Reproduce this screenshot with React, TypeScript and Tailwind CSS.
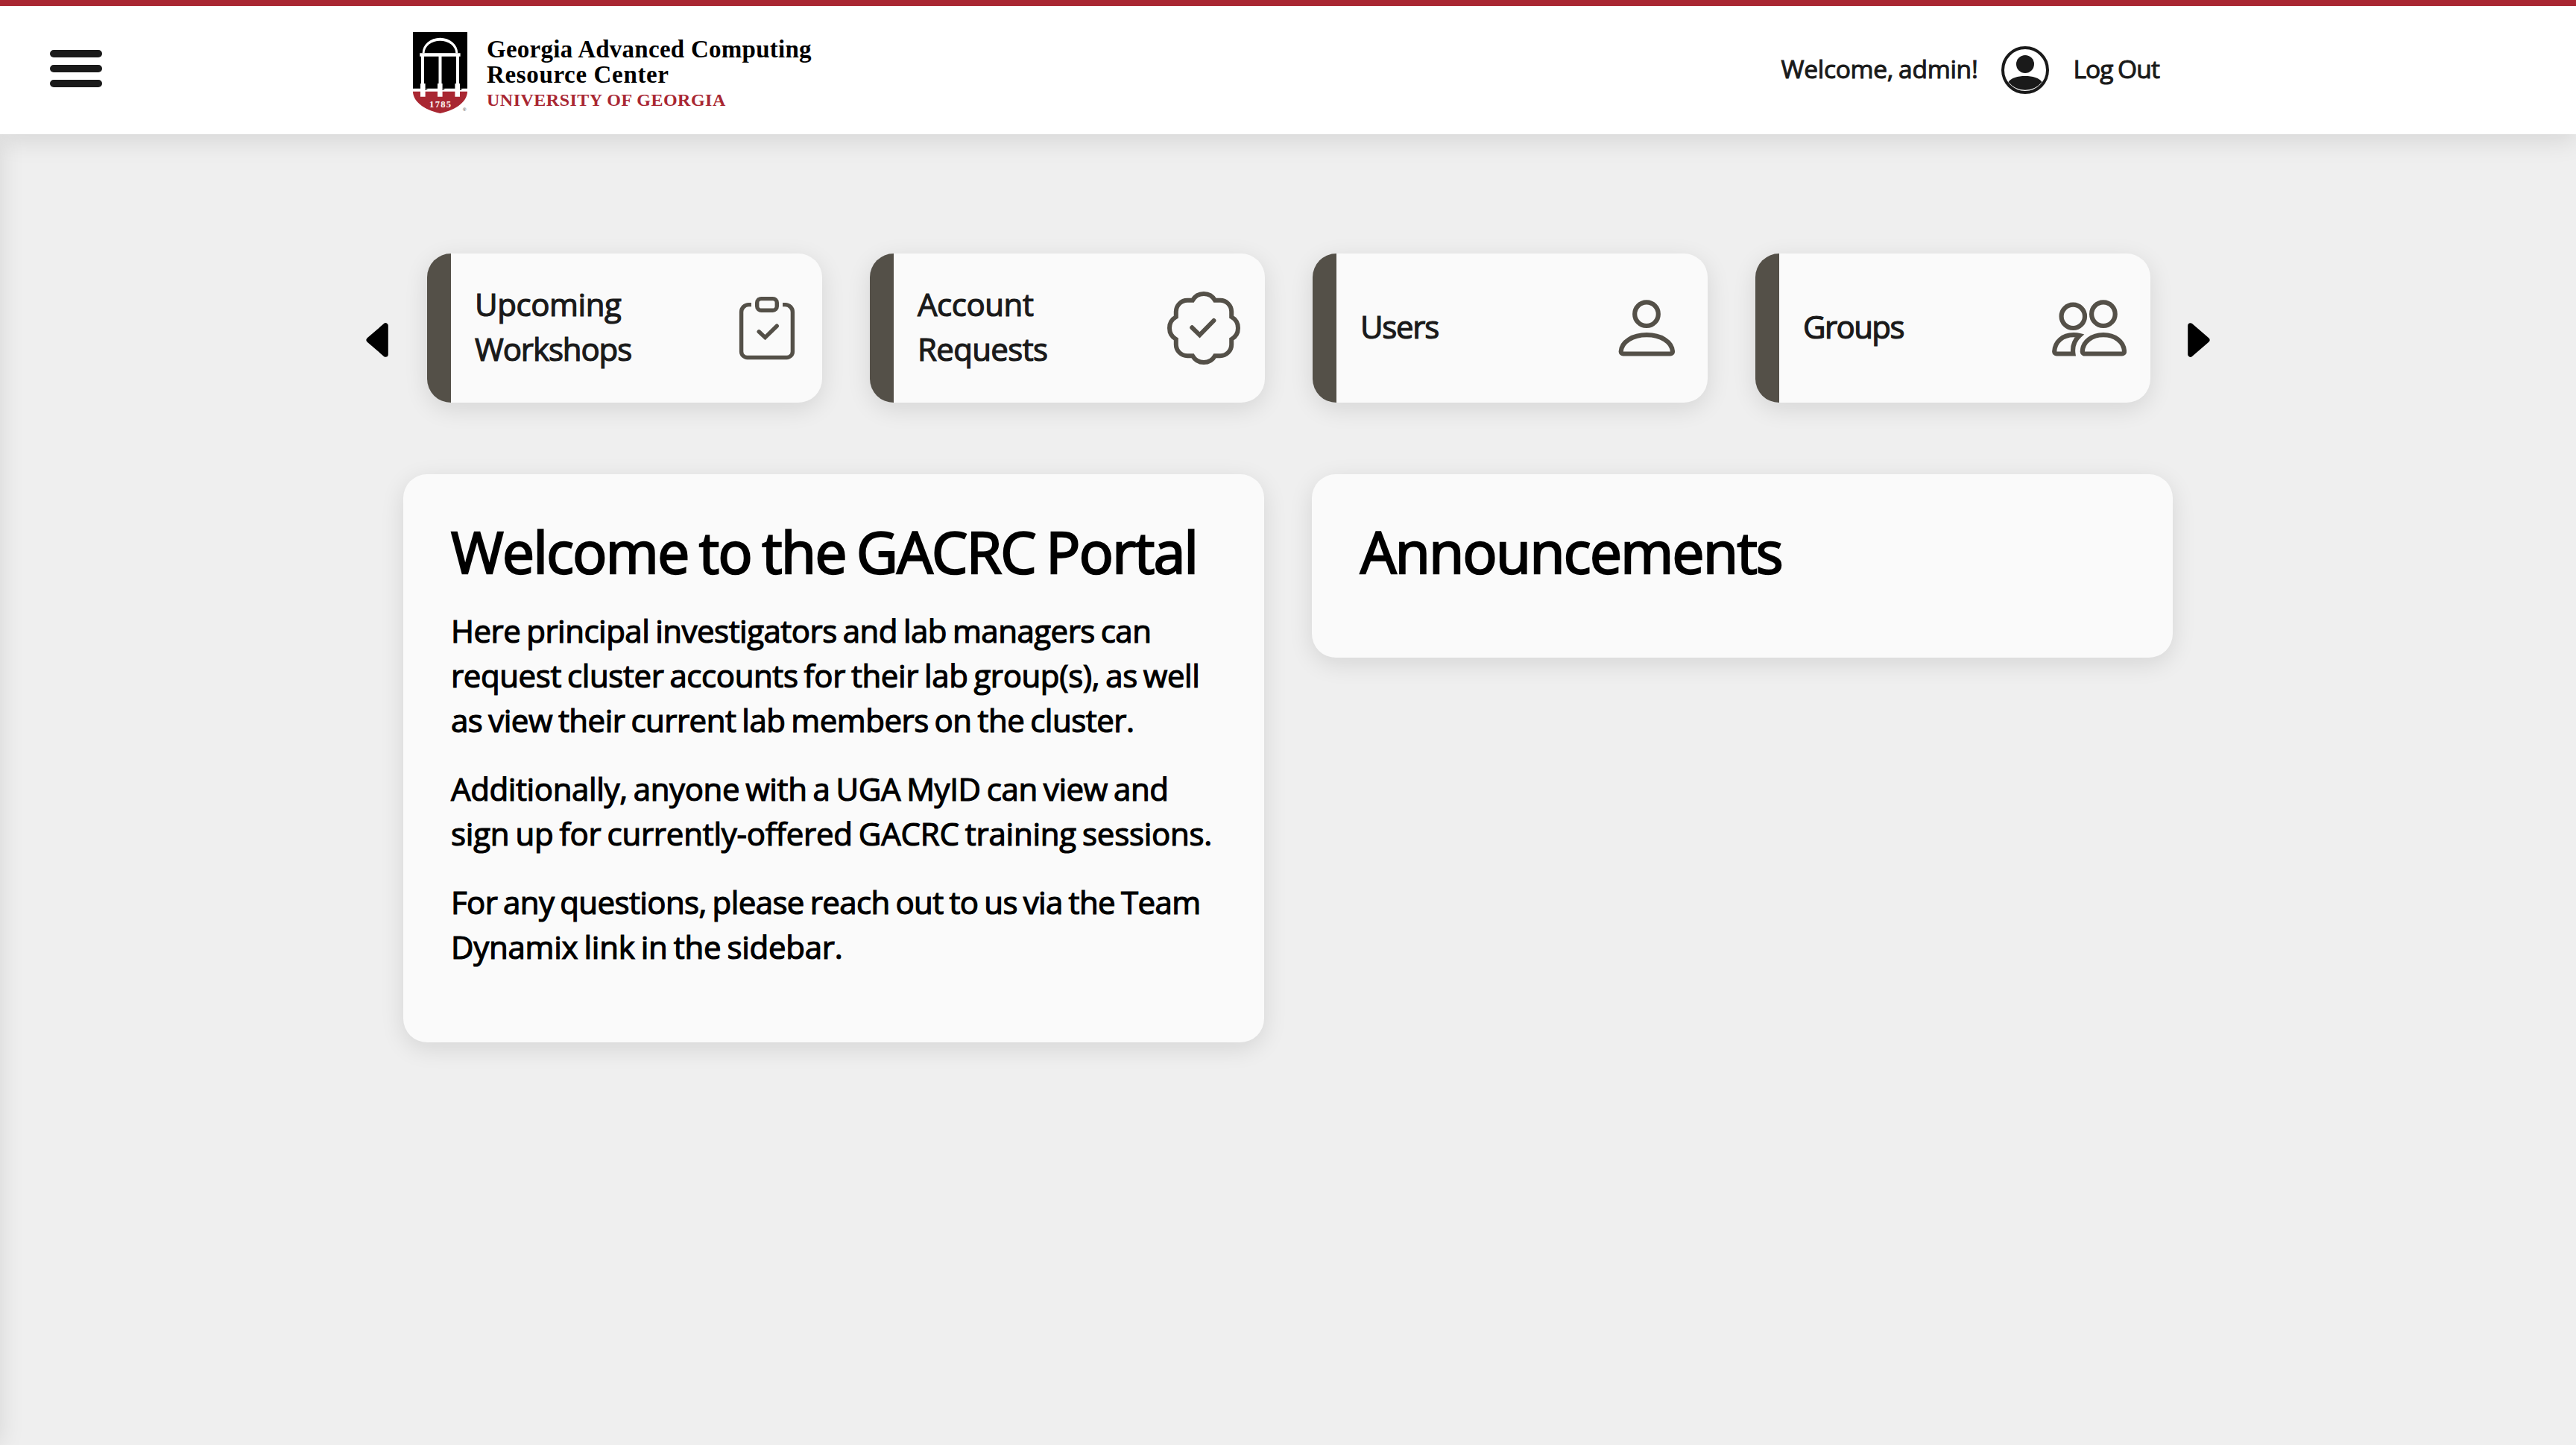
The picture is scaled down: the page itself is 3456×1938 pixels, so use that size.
import React from "react";

function MenuButton() {
  return (
    <button className="ml-[67px] mt-[59px] flex h-[50px] w-[70px] flex-col gap-[10px]" aria-label="Open menu">
      <span className="h-[10px] w-full rounded-full bg-[#1a1a1a]" />
      <span className="h-[10px] w-full rounded-full bg-[#1a1a1a]" />
      <span className="h-[10px] w-full rounded-full bg-[#1a1a1a]" />
    </button>
  );
}

function Shield() {
  return (
    <svg className="h-[112px] w-[76px]" viewBox="0 0 76 112">
      <path d="M0 0H73V75.8H0Z" fill="#000" />
      <path d="M12.6 28.5A23.85 20.8 0 0 1 60.3 28.5Z" fill="#fff" />
      <path d="M15.5 28.5A20.9 16.8 0 0 1 57.3 28.5Z" fill="#000" />
      <g fill="#fff">
        <path d="M9.2 28.3H63.6V32.7H9.2Z" />
        <path d="M11 32H15V70H11ZM34.5 32H38.5V70H34.5ZM58 32H62V70H58Z" />
      </g>
      <path d="M0 79.8H73C73 92 60 104 36.5 109C13 104 0 92 0 79.8Z" fill="#a92732" />
      <g fill="#fff">
        <path d="M10 69H16.6V86.7H10ZM33 69H39.6V86.7H33ZM56.4 69H63V86.7H56.4Z" />
      </g>
      <path d="M16.6 75.8H20.5L16.6 78ZM39.6 75.8H43.5L39.6 78ZM63 75.8H67L63 78Z" fill="#000" />
      <text x="37.2" y="100.7" textAnchor="middle" fontSize="12.5" letterSpacing="1.3" fill="#fff" className="font-['Liberation_Serif'] font-bold">
        1785
      </text>
      <text x="67" y="106" fontSize="6" fill="#333" className="font-['Liberation_Sans']">
        ®
      </text>
    </svg>
  );
}

function Logo() {
  return (
    <a className="flex pl-[13.5px] pt-[35px]">
      <Shield />
      <div className="ml-[23.5px] mt-[7px] flex flex-col whitespace-nowrap font-['Liberation_Serif',serif] font-bold text-black">
        <span className="text-[33px] leading-[33.7px] tracking-[0.26px]">Georgia Advanced Computing</span>
        <span className="text-[33px] leading-[33.7px] tracking-[0.65px]">Resource Center</span>
        <span className="text-[24px] leading-[35px] tracking-[0.5px] text-[#a92732]">UNIVERSITY OF GEORGIA</span>
      </div>
    </a>
  );
}

function Avatar() {
  return (
    <svg className="size-16" viewBox="0 0 64 64" fill="#1a1a1a">
      <circle cx="32" cy="32" r="30" fill="none" stroke="#1a1a1a" strokeWidth="4" />
      <circle cx="32" cy="24" r="12" />
      <path d="M9.5 48C13 42.6 22 40 32 40s19 2.6 22.5 8A29 29 0 0 1 9.5 48Z" />
    </svg>
  );
}

function Header() {
  return (
    <header className="relative z-10 grid h-[180px] grid-cols-[540px_1fr_540px] border-t-8 border-[#a92732] bg-white shadow-[0_8px_32px_rgba(0,0,0,0.11)]">
      <MenuButton />
      <div className="flex justify-between">
        <Logo />
        <nav className="flex items-center gap-8 whitespace-nowrap pr-[19px] text-[33.6px] leading-[48px] text-[#1a1a1a] [-webkit-text-stroke:1px_#1a1a1a] [word-spacing:-1.5px]">
          <span className="pb-1 tracking-[-0.32px]">Welcome, admin!</span>
          <Avatar />
          <a className="pb-1 tracking-[-0.9px]">Log Out</a>
        </nav>
      </div>
    </header>
  );
}

function CardIcon({ children, stroke }: { children: React.ReactNode; stroke: number }) {
  return (
    <svg className="size-[100px] shrink-0" viewBox="0 0 100 100" fill="none" stroke="#545048" strokeWidth={stroke} strokeLinecap="round">
      {children}
    </svg>
  );
}

const clipboard = (
  <CardIcon stroke={5.4}>
    <path strokeLinecap="butt" d="M37 18.6H33.6A10 10 0 0 0 23.6 28.6V81.5A8 8 0 0 0 31.6 89.5H84.4A8 8 0 0 0 92.4 81.5V28.6A10 10 0 0 0 82.4 18.6H79" />
    <rect x="44.7" y="10.6" width="26.6" height="15.6" rx="5.5" />
    <path d="M47.2 54.8L55.5 62.6L71.2 47.2" />
  </CardIcon>
);

const badge = (
  <CardIcon stroke={6}>
    <path
      strokeLinejoin="miter"
      d="M35 12.8A17.2 17.2 0 0 1 65 12.8H72A15.2 15.2 0 0 1 87.2 28V35A17.2 17.2 0 0 1 87.2 65V72A15.2 15.2 0 0 1 72 87.2H65A17.2 17.2 0 0 1 35 87.2H28A15.2 15.2 0 0 1 12.8 72V65A17.2 17.2 0 0 1 12.8 35V28A15.2 15.2 0 0 1 28 12.8Z"
    />
    <path d="M34.3 49.3L44.5 59.3L63.4 40" />
  </CardIcon>
);

const user = (
  <CardIcon stroke={6.2}>
    <circle cx="50" cy="31.2" r="15.8" />
    <path d="M18.7 84.5H82A3 3 0 0 0 85 81.5C84 68 69 59.2 50.3 59.2S16.6 68 15.7 81.5A3 3 0 0 0 18.7 84.5Z" />
  </CardIcon>
);

const group = (
  <CardIcon stroke={6.2}>
    <circle cx="28.3" cy="34.3" r="15.7" />
    <circle cx="68.9" cy="31.2" r="15.8" />
    <path d="M43.8 84.5H94A3 3 0 0 0 97 81.5C96.5 68 84 59.2 68.9 59.2S41.3 68 40.8 81.5A3 3 0 0 0 43.8 84.5Z" />
    <path d="M28.4 84.5H6.2A3 3 0 0 1 3.2 81.5C3.8 68.5 14 59.2 29 59.2C32 59.2 34.6 59.4 37 60C30.5 66 27 75 28.4 84.5Z" />
  </CardIcon>
);

const cards = [
  { lines: [["Upcoming", "tracking-[-0.41px]"], ["Workshops", "tracking-[-1.1px]"]], icon: clipboard },
  { lines: [["Account", "tracking-[-0.45px]"], ["Requests", "tracking-[-0.65px]"]], icon: badge },
  { lines: [["Users", "tracking-[-1.3px]"]], icon: user },
  { lines: [["Groups", "tracking-[-1.6px]"]], icon: group },
];

function Caret({ flip }: { flip?: boolean }) {
  return (
    <svg className={flip ? "mt-8 h-[46px] w-[30px] rotate-180" : "mt-8 h-[46px] w-[30px]"} viewBox="0 0 30 46" fill="#000" stroke="#000" strokeWidth="7" strokeLinejoin="round">
      <path d="M4 23L26.3 3.7V42.3Z" />
    </svg>
  );
}

function Carousel() {
  return (
    <section className="flex items-center justify-center gap-[51px]">
      <Caret />
      <div className="-mr-px ml-px flex gap-16">
        {cards.map((card) => (
          <a
            key={card.lines[0][0]}
            className="flex h-[200px] w-[530px] items-center justify-between rounded-[32px] border-l-[32px] border-[#545048] bg-[#fafafa] pl-8 pr-8 shadow-[0_8px_32px_rgba(0,0,0,0.11)]"
          >
            <div className="flex flex-col pb-[5px] text-[42px] leading-[60px] text-[#1a1a1a] [-webkit-text-stroke:1.2px_#1a1a1a]">
              {card.lines.map(([text, tracking]) => (
                <span key={text} className={tracking}>
                  {text}
                </span>
              ))}
            </div>
            {card.icon}
          </a>
        ))}
      </div>
      <Caret flip />
    </section>
  );
}

const paragraphs = [
  [
    ["Here principal investigators and lab managers can", "tracking-[-0.5px]"],
    ["request cluster accounts for their lab group(s), as well", "tracking-[-0.4px]"],
    ["as view their current lab members on the cluster.", "tracking-[-0.5px]"],
  ],
  [
    ["Additionally, anyone with a UGA MyID can view and", "tracking-[-0.38px]"],
    ["sign up for currently-offered GACRC training sessions.", "tracking-[-0.24px]"],
  ],
  [
    ["For any questions, please reach out to us via the Team", "tracking-[-0.6px]"],
    ["Dynamix link in the sidebar.", "tracking-[-0.25px]"],
  ],
];

function Panels() {
  return (
    <section className="mx-auto mt-24 grid w-[2374px] grid-cols-2 items-start gap-16 whitespace-nowrap text-black">
      <article className="h-[762px] rounded-[32px] bg-[#fafafa] pl-[64px] pt-[65px] shadow-[0_8px_32px_rgba(0,0,0,0.11)]">
        <h1 className="text-[76.6px] leading-[77px] tracking-[-1.6px] [-webkit-text-stroke:2.4px_#000] [word-spacing:-4px]">
          Welcome to the GACRC Portal
        </h1>
        <div className="mt-[38px] flex flex-col gap-8 text-[42px] leading-[60px] [-webkit-text-stroke:1.2px_#000] [word-spacing:-2.5px]">
          {paragraphs.map((lines, i) => (
            <p key={i}>
              {lines.map(([text, tracking]) => (
                <span key={text} className={`block ${tracking}`}>
                  {text}
                </span>
              ))}
            </p>
          ))}
        </div>
      </article>
      <article className="h-[246px] rounded-[32px] bg-[#fafafa] pl-[65px] pt-[65px] shadow-[0_8px_32px_rgba(0,0,0,0.11)]">
        <h1 className="text-[76.6px] leading-[77px] tracking-[-1.6px] [-webkit-text-stroke:2.4px_#000]">Announcements</h1>
      </article>
    </section>
  );
}

export default function App() {
  return (
    <div className="relative h-[1938px] overflow-hidden bg-[#efefef] font-['Open_Sans',sans-serif]">
      <Header />
      <aside className="absolute bottom-0 right-full top-[180px] w-[600px] bg-white shadow-[0_0_32px_rgba(0,0,0,0.11)]" />
      <main className="pt-[160px]">
        <Carousel />
        <Panels />
      </main>
    </div>
  );
}
